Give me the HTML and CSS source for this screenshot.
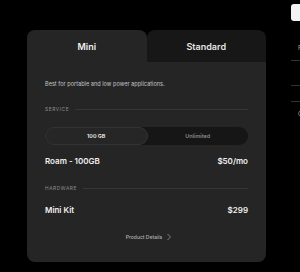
FILE: index.html
```html
<!DOCTYPE html>
<html>
<head>
<meta charset="utf-8">
<link rel="stylesheet" href="styles.css">
</head>
<body>
<div class="page">
  <div class="card">
    <div class="tabs">
      <div class="tab tab-active">Mini</div>
      <div class="tab tab-idle">Standard</div>
    </div>
    <div class="body">
      <p class="desc">Best for portable and low power applications.</p>
      <div class="section-label"><span>SERVICE</span><i class="rule"></i></div>
      <div class="seg">
        <div class="seg-item seg-on">100 GB</div>
        <div class="seg-item">Unlimited</div>
      </div>
      <div class="line-item"><span>Roam - 100GB</span><span>$50/mo</span></div>
      <div class="section-label hw"><span>HARDWARE</span><i class="rule"></i></div>
      <div class="line-item kit"><span>Mini Kit</span><span>$299</span></div>
      <div class="details">Product Details
        <svg width="6" height="8" viewBox="0 0 6 8"><path d="M1.5 1 L4.5 4 L1.5 7" fill="none" stroke="#8a8a8a" stroke-width="0.9"/></svg>
      </div>
    </div>
  </div>
  <div class="side">
    <div class="side-btn"></div>
    <div class="side-f">F</div>
    <div class="side-rule r1"></div>
    <div class="side-rule r2"></div>
    <div class="side-rule r3"></div>
    <div class="side-c">C</div>
  </div>
</div>
</body>
</html>
```
FILE: styles.css
```css
html, body {
  margin: 0;
  padding: 0;
  background: #000;
  width: 300px;
  height: 272px;
  overflow: hidden;
  font-family: Inter, "Noto Sans", sans-serif;
  color: #eee;
}
.page {
  display: flex;
  align-items: flex-start;
  padding: 30px 0 0 27px;
  gap: 25px;
}
.card {
  width: 239px;
  flex: none;
}
.tabs {
  display: flex;
  height: 32px;
}
.tab {
  flex: 1;
  display: flex;
  align-items: center;
  justify-content: center;
  font-size: 9px;
  font-weight: 600;
  border-radius: 8px 8px 0 0;
}
.tab-active {
  background: #252525;
  color: #f2f2f2;
}
.tab-idle {
  background: #171717;
  color: #e6e6e6;
}
.body {
  background: #252525;
  border-radius: 0 0 8px 8px;
  padding: 18px 18px 0;
  height: 200px;
  box-sizing: border-box;
}
.desc {
  margin: 0;
  font-size: 5.6px;
  line-height: 8px;
  color: #c4c4c4;
}
.section-label {
  display: flex;
  align-items: center;
  gap: 6px;
  margin-top: 17px;
  font-size: 4.8px;
  letter-spacing: 0.6px;
  color: #909090;
  line-height: 8px;
}
.rule {
  flex: 1;
  height: 1px;
  background: #363636;
}
.seg {
  display: flex;
  margin-top: 14px;
  height: 18px;
  background: #161616;
  border-radius: 9px;
}
.seg-item {
  flex: 1;
  display: flex;
  align-items: center;
  justify-content: center;
  font-size: 5.4px;
  font-weight: 600;
  color: #8c8c8c;
  border-radius: 9px;
}
.seg-on {
  background: #262626;
  border: 1px solid #333;
  color: #f0f0f0;
}
.line-item {
  display: flex;
  justify-content: space-between;
  align-items: center;
  margin-top: 11px;
  font-size: 8px;
  font-weight: 600;
  line-height: 10px;
  color: #f0f0f0;
}
.hw {
  margin-top: 18px;
}
.kit {
  margin-top: 13px;
}
.details {
  display: flex;
  align-items: center;
  justify-content: center;
  gap: 4px;
  margin-top: 18px;
  margin-left: 5px;
  font-size: 5px;
  font-weight: 500;
  color: #b0b0b0;
  line-height: 8px;
}
.side {
  width: 20px;
  flex: none;
  margin-top: -26px;
  display: flex;
  flex-direction: column;
}
.side-btn {
  width: 20px;
  height: 17px;
  background: #f4f4f4;
  border-radius: 3px;
}
.side-f {
  margin-top: 23px;
  padding-left: 7px;
  font-size: 6px;
  line-height: 8px;
  color: #aaa;
}
.side-rule {
  height: 1px;
  background: #333;
}
.r1 { margin-top: 8px; }
.r2 { margin-top: 24px; }
.r3 { margin-top: 15px; }
.side-c {
  margin-top: 8px;
  padding-left: 7px;
  font-size: 6px;
  line-height: 8px;
  color: #aaa;
}
```
